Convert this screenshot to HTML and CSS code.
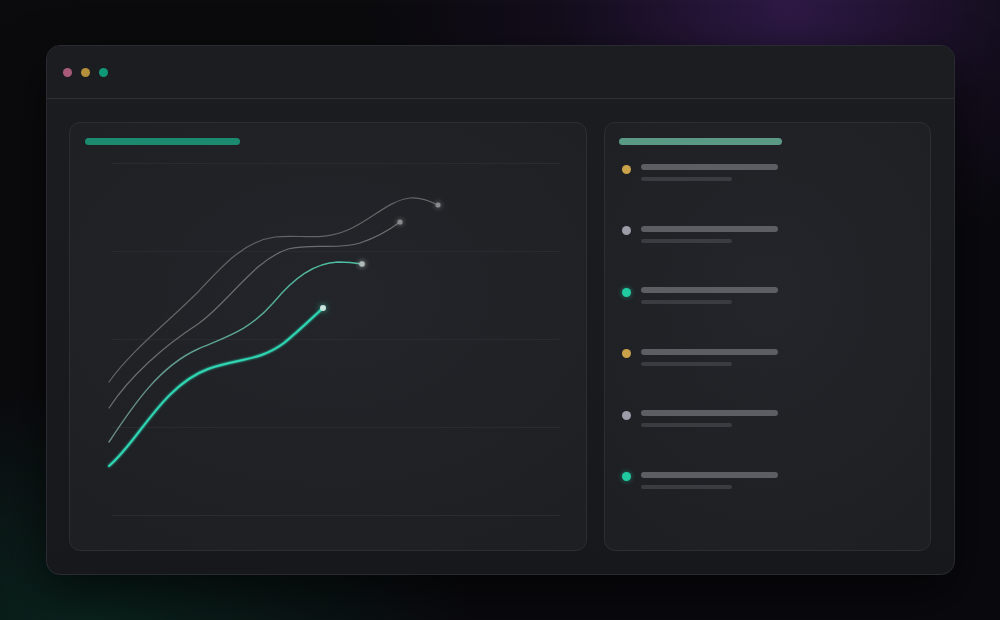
FILE: index.html
```html
<!DOCTYPE html>
<html>
<head>
<meta charset="utf-8">
<link rel="stylesheet" href="styles.css">
</head>
<body>
<div class="stage">
  <div class="window">
    <div class="titlebar">
      <span class="light pink"></span>
      <span class="light gold"></span>
      <span class="light green"></span>
    </div>
    <div class="content">
      <div class="panel chart-panel">
        <div class="title-bar teal"></div>
        <svg class="chart" viewBox="85 145 486 390" width="486" height="390">
          <defs>
            <linearGradient id="g3" x1="109" y1="442" x2="362" y2="264" gradientUnits="userSpaceOnUse">
              <stop offset="0" stop-color="#6a8a84"/>
              <stop offset="1" stop-color="#4cbfa4"/>
            </linearGradient>
            <filter id="glow" x="-100%" y="-100%" width="300%" height="300%">
              <feGaussianBlur stdDeviation="2.6" result="b"/>
              <feMerge><feMergeNode in="b"/><feMergeNode in="SourceGraphic"/></feMerge>
            </filter>
            <filter id="tealglow" x="-150%" y="-150%" width="400%" height="400%">
              <feGaussianBlur in="SourceGraphic" stdDeviation="3" result="b"/>
              <feFlood flood-color="#2fd6b3" flood-opacity="0.8"/>
              <feComposite in2="b" operator="in" result="g"/>
              <feMerge><feMergeNode in="g"/><feMergeNode in="SourceGraphic"/></feMerge>
            </filter>
            <filter id="soft" x="-50%" y="-50%" width="200%" height="200%">
              <feGaussianBlur stdDeviation="1.2" result="b"/>
              <feMerge><feMergeNode in="b"/><feMergeNode in="SourceGraphic"/></feMerge>
            </filter>
          </defs>
          <g class="grid">
            <line x1="112" y1="163.5" x2="560" y2="163.5"/>
            <line x1="112" y1="251.5" x2="560" y2="251.5"/>
            <line x1="112" y1="339.5" x2="560" y2="339.5"/>
            <line x1="112" y1="427.5" x2="560" y2="427.5"/>
            <line x1="112" y1="515.5" x2="560" y2="515.5"/>
          </g>
          <path class="c1" d="M109,382 C130,352 168,322 198,292 C222,266 244,241 275,237 C302,234 322,242 350,229 C372,219 390,200 410,198 C422,197 432,202 438,205"/>
          <path class="c2" d="M109,408 C130,376 164,346 198,324 C228,303 254,260 288,249 C312,243 338,250 360,243 C378,237 392,228 400,222"/>
          <path class="c3" d="M109,442 C134,404 160,366 198,349 C228,336 250,330 274,302 C294,278 314,263 338,262 C350,262 356,263 362,264"/>
          <path class="c4" filter="url(#soft)" d="M109,466 C138,442 162,386 208,369 C238,358 258,362 284,343 C300,330 312,318 323,308"/>
          <circle class="e1" cx="438" cy="205" r="2.5" filter="url(#glow)"/>
          <circle class="e1" cx="400" cy="222" r="2.6" filter="url(#glow)"/>
          <circle class="e3" cx="362" cy="264" r="2.8" filter="url(#glow)"/>
          <circle class="e4" cx="323" cy="308" r="3" filter="url(#tealglow)"/>
        </svg>
      </div>
      <div class="panel list-panel">
        <div class="title-bar sage"></div>
        <div class="items">
          <div class="item"><span class="dot gold"></span><div class="lines"><span class="l1"></span><span class="l2"></span></div></div>
          <div class="item"><span class="dot gray"></span><div class="lines"><span class="l1"></span><span class="l2"></span></div></div>
          <div class="item"><span class="dot teal"></span><div class="lines"><span class="l1"></span><span class="l2"></span></div></div>
          <div class="item"><span class="dot gold"></span><div class="lines"><span class="l1"></span><span class="l2"></span></div></div>
          <div class="item"><span class="dot gray"></span><div class="lines"><span class="l1"></span><span class="l2"></span></div></div>
          <div class="item"><span class="dot teal"></span><div class="lines"><span class="l1"></span><span class="l2"></span></div></div>
        </div>
      </div>
    </div>
  </div>
</div>
</body>
</html>
```

FILE: styles.css
```css
* { box-sizing: border-box; }
html, body {
  margin: 0;
  padding: 0;
  width: 1000px;
  height: 620px;
  overflow: hidden;
  font-family: "Inter", "Liberation Sans", sans-serif;
}
.stage {
  width: 1000px;
  height: 620px;
  padding: 45px 45px 45px 46px;
  background:
    radial-gradient(ellipse 420px 240px at 790px 10px, rgba(58, 30, 88, 0.75), rgba(40, 20, 60, 0.3) 55%, rgba(0,0,0,0) 100%),
    radial-gradient(ellipse 380px 230px at 90px 620px, rgba(10, 44, 34, 0.75), rgba(0,0,0,0) 100%),
    linear-gradient(135deg, #0b0b0d 0%, #0a0a0e 50%, #0a090e 100%);
}
.window {
  width: 909px;
  height: 530px;
  border-radius: 14px;
  border: 1px solid #2a2b30;
  background: linear-gradient(180deg, #1c1d21 0%, #17181b 100%);
  box-shadow: 0 20px 50px rgba(0,0,0,0.6);
  display: flex;
  flex-direction: column;
  overflow: hidden;
}
.titlebar {
  height: 53px;
  flex: none;
  display: flex;
  align-items: center;
  gap: 9px;
  padding: 0 0 0 16px;
  background: #1c1d21;
  border-bottom: 1px solid #2e3035;
}
.light {
  width: 9px;
  height: 9px;
  border-radius: 50%;
  display: block;
}
.light.pink { background: #a85b78; }
.light.gold { background: #b48f3c; }
.light.green { background: #0f9877; }
.content {
  flex: 1;
  display: flex;
  gap: 17px;
  padding: 23px 23px 23px 22px;
}
.panel {
  border: 1px solid #2c2e33;
  border-radius: 11px;
  background: radial-gradient(ellipse 80% 70% at 50% 40%, #23252a 0%, #1e1f23 100%);
  display: flex;
  flex-direction: column;
}
.chart-panel {
  width: 518px;
  padding: 15px 15px 0 15px;
}
.list-panel {
  width: 327px;
  padding: 15px 14px 0 14px;
}
.title-bar {
  height: 7px;
  border-radius: 4px;
  flex: none;
}
.title-bar.teal { width: 155px; background: #1c8a6f; }
.title-bar.sage { width: 163px; background: #5a9a84; }
.chart {
  display: block;
  width: 486px;
  height: 390px;
}
.grid line { stroke: #292b30; stroke-width: 1; }
.c1, .c2, .c3, .c4 { fill: none; stroke-linecap: round; }
.c1 { stroke: #636468; stroke-width: 1.2; }
.c2 { stroke: #6c6d71; stroke-width: 1.2; }
.c3 { stroke: url(#g3); stroke-width: 1.4; }
.c4 { stroke: #2fd6b3; stroke-width: 2; }
.e1 { fill: #8a8b8f; }
.e3 { fill: #b0bcb8; }
.e4 { fill: #c8e6de; }
.items {
  margin-top: 19px;
  display: flex;
  flex-direction: column;
  gap: 44.6px;
}
.item {
  display: flex;
  align-items: flex-start;
  gap: 10px;
  padding-left: 3px;
}
.dot {
  width: 9px;
  height: 9px;
  border-radius: 50%;
  margin-top: 0.5px;
  flex: none;
}
.dot.gold { background: #c9a24a; }
.dot.gray { background: #9c9da8; }
.dot.teal { background: #21caa1; box-shadow: 0 0 5px rgba(33, 202, 161, 0.55); }
.lines {
  display: flex;
  flex-direction: column;
  gap: 7px;
}
.l1 {
  display: block;
  width: 137px;
  height: 6px;
  border-radius: 3px;
  background: #5c5e63;
}
.l2 {
  display: block;
  width: 91px;
  height: 4px;
  border-radius: 2px;
  background: #3a3c42;
}
```
